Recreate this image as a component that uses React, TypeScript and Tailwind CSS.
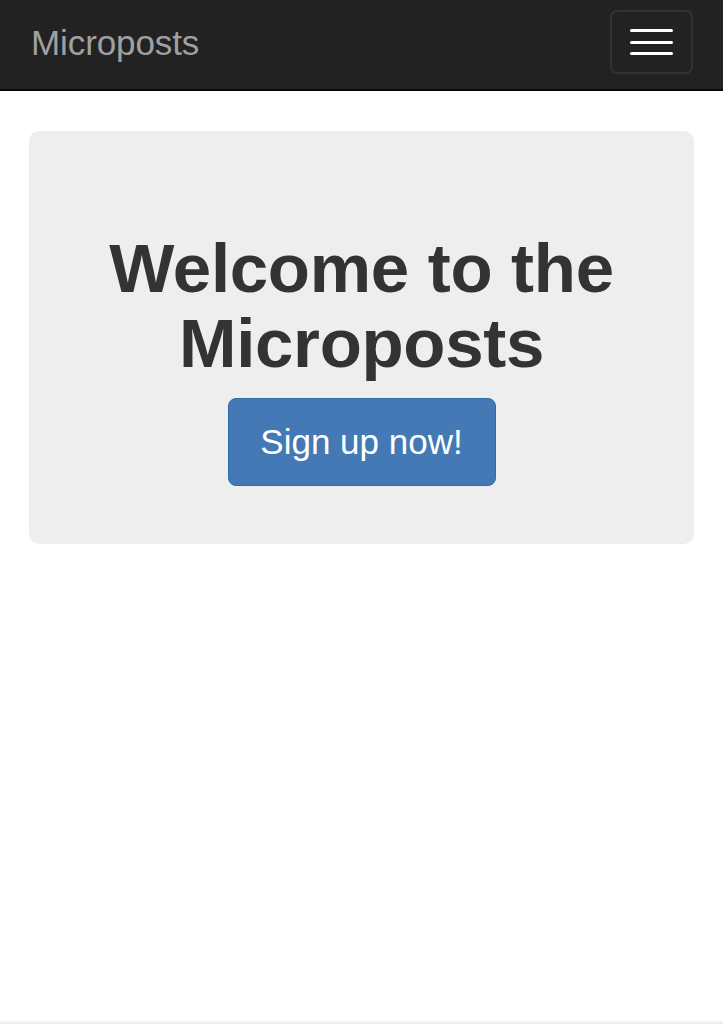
export default function App() {
  return (
    <div className="min-h-[1024px] flex flex-col bg-white" style={{ fontFamily: '"Liberation Sans", Arial, sans-serif' }}>
      <nav className="h-[91px] bg-[#222222] border-b-2 border-[#080808] flex items-start justify-between pl-[31px] pr-[30px]">
        <span className="mt-[25px] text-[35px] text-[#a0a0a0] leading-none tracking-[-0.1px]">Microposts</span>
        <button className="mt-[10px] w-[83px] h-[64px] border-2 border-[#333333] rounded-[7px] flex flex-col items-center justify-center gap-[8.5px]">
          <span className="block w-[43px] h-[3px] rounded-[2px] bg-white" />
          <span className="block w-[43px] h-[3px] rounded-[2px] bg-white" />
          <span className="block w-[43px] h-[3px] rounded-[2px] bg-white" />
        </button>
      </nav>
      <main className="flex-1 px-[29px] pt-[40px]">
        <div className="bg-[#eeeeee] rounded-[10px] h-[413px] flex flex-col items-center pt-[100px]">
          <h1 className="text-[69px] leading-[75px] font-bold text-[#333333] text-center tracking-[-0.3px]">
            Welcome to the
            <br />
            Microposts
          </h1>
          <button className="mt-[17px] w-[268px] h-[88px] bg-[#4479b5] border border-[#2e6da4] rounded-[8px] text-white text-[35px]">
            Sign up now!
          </button>
        </div>
      </main>
      <div className="h-[4px] bg-gradient-to-b from-white to-[#e8e8e8]" />
    </div>
  );
}
